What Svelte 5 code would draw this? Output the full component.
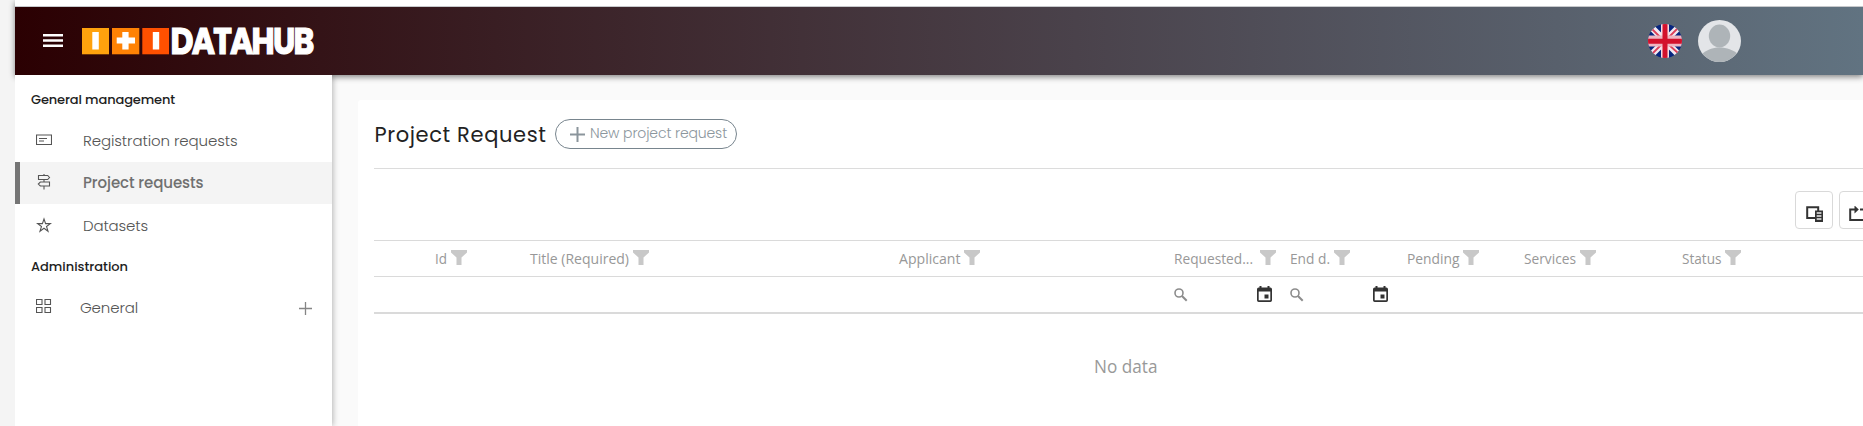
<script>
  const requests = [
    { label: 'Registration requests', icon: 'card', width: 154.5 },
    { label: 'Project requests', icon: 'sign', width: 120.5, active: true },
    { label: 'Datasets', icon: 'star', width: 65 }
  ];

  const columns = [
    { label: 'Id', width: 12 },
    { label: 'Title (Required)', width: 99 },
    { label: 'Applicant', width: 61.5 },
    { label: 'Requested...', width: 79, date: true, wide: true },
    { label: 'End d.', width: 40, date: true },
    { label: 'Pending', width: 52.5 },
    { label: 'Services', width: 52 },
    { label: 'Status', width: 39.5 }
  ];

  // Adjusts tracking so a label takes the given width.
  function track(node, width) {
    node.style.letterSpacing = '0px';
    const natural = node.getBoundingClientRect().width;
    const spacing = (width - natural) / node.textContent.length;
    node.style.letterSpacing = `${spacing}px`;
  }
</script>

<div class="page">
  <header>
    <svg class="burger" width="20" height="14" viewBox="0 0 20 14"><path d="M0 0h20v2.400H0zM0 5.300h20v2.400H0zM0 10.600h20V13H0z" fill="#fff" /></svg>
    <svg class="logo" width="240" height="61" viewBox="0 0 240 61">
      <rect x="0" y="18" width="27" height="26.300" fill="#ffa20d" />
      <rect x="30" y="18" width="27.300" height="26.300" fill="#ff8204" />
      <rect x="60.300" y="18" width="26.700" height="26.300" fill="#ff5000" />
      <path d="M10.300 22h6.500v17.500h-6.500zM40.300 22h6.300v5.600H53v6h-6.400v5.900h-6.300v-5.900h-5.600v-6h5.600zM70.800 22h6.400v17.500h-6.400z" fill="#fff" />
      <text x="88.500" y="44" textLength="142" lengthAdjust="spacingAndGlyphs">DATAHUB</text>
    </svg>
    <div class="grow"></div>
    <svg class="flag" width="34" height="34" viewBox="0 0 34 34">
      <defs><clipPath id="round"><circle cx="17" cy="17" r="17" /></clipPath></defs>
      <g clip-path="url(#round)">
        <rect width="34" height="34" fill="#07257f" />
        <path d="M0 0l34 34M34 0L0 34" stroke="#f3e9f0" stroke-width="6.500" />
        <path d="M4 5l9 9M30 4l-9 9M4 30l9-9M30 29l-9-8" stroke="#dc4059" stroke-width="1.800" />
        <path d="M17 0v34" stroke="#f6dbe2" stroke-width="8" />
        <path d="M0 17h34" stroke="#eeb5c1" stroke-width="11" />
        <path d="M17 0v34M0 17.300h34" stroke="#d3112c" stroke-width="5" />
      </g>
    </svg>
    <svg class="avatar" width="43" height="42" viewBox="0 0 43 42">
      <defs><clipPath id="oval"><ellipse cx="21.500" cy="21" rx="21.500" ry="21" /></clipPath></defs>
      <g clip-path="url(#oval)" fill="#aeb4b8">
        <rect width="43" height="42" fill="#e3e5e8" />
        <ellipse cx="21.500" cy="16" rx="10.700" ry="11.400" />
        <path d="M4 34c5-4 10-6.500 17.500-6.500S35 30 40 34v9H4z" />
      </g>
    </svg>
  </header>

  <div class="body">
    <nav>
      <h2><span use:track={144}>General management</span></h2>
      {#each requests as item}
        <a class="item" class:active={item.active} class:raised={item.icon !== 'star'}>
          <span class="ico">
            {#if item.icon === 'card'}
              <svg width="16" height="16" viewBox="0 0 16 16"><path d="M.5 3h15v9.500H.5z" /><path d="M3 6.500h8M3 9h5" /></svg>
            {:else if item.icon === 'sign'}
              <svg width="16" height="16" viewBox="0 0 16 16"><path d="M8 0v1.500M8 5.500v2.500M8 12v3.500M2.500 1.500h9.200l1.800 2-1.800 2H2.500zM13.500 8H4.300l-2 2 2 2h9.200z" /></svg>
            {:else}
              <svg width="16" height="16" viewBox="0 0 16 16"><path d="M8 2l1.600 4.600h4.800l-3.900 2.900 1.500 4.700L8 11.300l-4 2.900 1.500-4.700-3.900-2.900h4.800z" /></svg>
            {/if}
          </span>
          <span class="label" use:track={item.width}>{item.label}</span>
        </a>
      {/each}
      <h2 class="second"><span use:track={97}>Administration</span></h2>
      <a class="item group">
        <span class="ico"><svg width="16" height="16" viewBox="0 0 16 16"><path d="M.5 1.500h5.500v5H.5zM9 1.500h5.500v5H9zM.5 9.500h5.500v5H.5zM9 9.500h5.500v5H9z" /></svg></span>
        <span class="label" use:track={58}>General</span>
        <svg class="plus" width="13" height="13" viewBox="0 0 13 13"><path d="M6.500 0v13M0 6.500h13" stroke="#858585" stroke-width="1.300" /></svg>
      </a>
    </nav>

    <main>
      <section>
        <div class="title">
          <h1><span use:track={172}>Project Request</span></h1>
          <button class="new">
            <svg width="15" height="15" viewBox="0 0 15 15"><path d="M7.500 0v15M0 7.500h15" stroke="#8b959c" stroke-width="2" /></svg>
            <span use:track={137}>New project request</span>
          </button>
        </div>
        <div class="tools">
          <button class="tool">
            <svg width="18" height="17" viewBox="0 0 18 17"><path d="M9 12H1.200V1.200h11V5" fill="none" stroke="#333" stroke-width="2" /><path d="M9 4.500h8V16H9z" fill="#333" /><path d="M10.700 7h4.700M10.700 10h4.700M10.700 13h4.700" stroke="#eee" stroke-width="1.400" /></svg>
          </button>
          <button class="tool">
            <svg width="18" height="17" viewBox="0 0 18 17"><path d="M6 3.500H1.200v10.500h15.600V3.500H11" fill="none" stroke="#333" stroke-width="2" /><path d="M5.500 -.5l4.300 4-4.300 4z" fill="#333" /></svg>
          </button>
        </div>
        <div class="row head">
          <span></span>
          {#each columns as col}
            <div class="cell" class:wide={col.wide}>
              <svg class="caption" width={col.width + 1} height="34">
                <text x="1" y="22" textLength={col.width} lengthAdjust="spacingAndGlyphs">{col.label}</text>
              </svg>
              <svg width="16" height="15" viewBox="0 0 16 15"><path d="M0 0h16v2.500l-5.500 5V15h-5V7.500L0 2.500z" fill="#c8c8c8" /></svg>
            </div>
          {/each}
        </div>
        <div class="row filters">
          <span></span>
          {#each columns as col}
            <div class="cell filter">
              {#if col.date}
                <svg width="14" height="14" viewBox="0 0 14 14"><circle cx="5" cy="5" r="4" fill="none" stroke="#8c8c8c" stroke-width="1.600" /><path d="M8 8l4.700 4.700" stroke="#8c8c8c" stroke-width="2" /></svg>
                <svg class="calendar" width="15" height="16" viewBox="0 0 15 16"><path d="M2.500 0h2v1.500h6V0h2v1.500h.8q1.700 0 1.700 1.700v11q0 1.800-1.700 1.800H1.700Q0 16 0 14.200v-11q0-1.700 1.700-1.700h.8zM1.700 5.500v8.800h11.600V5.500z" fill="#333" fill-rule="evenodd" /><path d="M7.500 8.500h4v4h-4z" fill="#333" /></svg>
              {/if}
            </div>
          {/each}
        </div>
        <div class="empty">
          <svg width="70" height="38"><text x="1" y="25" textLength="63.500" lengthAdjust="spacingAndGlyphs">No data</text></svg>
        </div>
      </section>
    </main>
  </div>
</div>

<style>
  :global(body) { overflow: hidden; background: #f4f4f4; }
  * { box-sizing: border-box; }
  .page { height: 426px; padding-left: 15px; overflow: hidden; font-family: Poppins, Inter, sans-serif; display: flex; flex-direction: column; }
  header { flex: 0 0 75px; border-top: 6px solid #fff; background: linear-gradient(90deg, #2b0002, #617381); display: flex; align-items: center; position: relative; z-index: 3; box-shadow: inset 0 1px #c7c9cc, 0 2px 6px rgba(0, 0, 0, .48); }
  .burger { margin-left: 28px; }
  .logo { margin-left: 19px; overflow: visible; }
  .logo text { font: 700 36px Poppins, Inter, sans-serif; letter-spacing: -2px; fill: #fff; stroke: #fff; stroke-width: 1.200px; }
  .grow { flex: 1; }
  .flag { margin-right: 16px; }
  .avatar { margin-right: 122px; }
  .body { flex: 1; display: flex; min-height: 0; }
  nav { width: 317px; background: #fff; position: relative; z-index: 4; box-shadow: 1px 0 6px rgba(0, 0, 0, .28); clip-path: inset(0 -15px 0 0); }
  h1, h2 { margin: 0; }
  h2 { height: 45px; padding: 3px 0 0 16px; font-size: 13px; font-weight: 500; line-height: 44px; color: #1e1e1e; white-space: nowrap; }
  h2.second { height: 42px; padding-top: 0; line-height: 41px; }
  .item { height: 42px; display: flex; align-items: center; color: #555; font-size: 15px; font-weight: 300; }
  .raised { padding-bottom: 2px; }
  .ico { margin-left: 21px; width: 47px; height: 17px; display: block; }
  .ico svg { display: block; fill: none; stroke: #555; stroke-width: 1.100; }
  .label { white-space: nowrap; }
  .active { background: #f4f4f4; box-shadow: inset 5px 0 #757575; color: #707070; font-weight: 500; }
  .active .label { margin-top: 1px; }
  .group .ico { width: 44px; margin-top: -5px; }
  .group .label { margin-top: -4px; }
  .plus { margin-left: auto; margin-right: 20px; margin-top: -1px; }
  main { flex: 1; min-width: 0; background: #fafafa; padding: 25px 0 0 26px; }
  section { height: 100%; background: #fff; padding-left: 16px; border-radius: 3px 0 0; }
  .title { height: 69px; border-bottom: 1px solid #dcdcdc; display: flex; align-items: flex-start; }
  h1 { width: 181px; padding-left: .5px; margin-top: 19px; font-size: 21px; font-weight: 400; line-height: 31px; color: #222; white-space: nowrap; }
  button { background: none; padding: 0; font-family: inherit; display: flex; }
  .new { width: 182px; height: 30px; margin-top: 19px; border: 1px solid #78858e; border-radius: 16px; align-items: center; padding-left: 14px; gap: 5px; font-size: 14px; font-weight: 300; color: #8b969d; white-space: nowrap; }
  .new span { margin-top: -1px; }
  .tools { height: 71px; display: flex; gap: 6px; padding: 22px 0 0 1421px; }
  .tool { flex: 0 0 38px; height: 38px; border: 1px solid #d9d9d9; border-radius: 4px; padding: 14px 0 0 10px; }
  .tool + .tool { padding-left: 9px; }
  .row { display: grid; grid-template-columns: 60px 95px 369px 275px 116px 117px 117px 158px 1fr; border-top: 1px solid #dadada; }
  .caption text { font: 15px 'Open Sans', 'Noto Sans', sans-serif; fill: #989898; }
  .head { height: 36px; }
  .cell { display: flex; align-items: center; gap: 3.500px; white-space: nowrap; }
  .cell svg { flex: none; margin-bottom: 3px; }
  .cell .caption { margin-bottom: 0; overflow: visible; }
  .wide { gap: 7px; }
  .filters { height: 38px; border-bottom: 2px solid #dadada; }
  .filter { padding-left: 1px; }
  .filter svg { margin-bottom: 0; }
  .filter .calendar { margin: -2px 0 0 65px; }
  .empty { padding: 34px 0 0 719px; }
  .empty svg { display: block; }
  .empty text { font: 18px 'Open Sans', 'Noto Sans', sans-serif; fill: #999; }
</style>
